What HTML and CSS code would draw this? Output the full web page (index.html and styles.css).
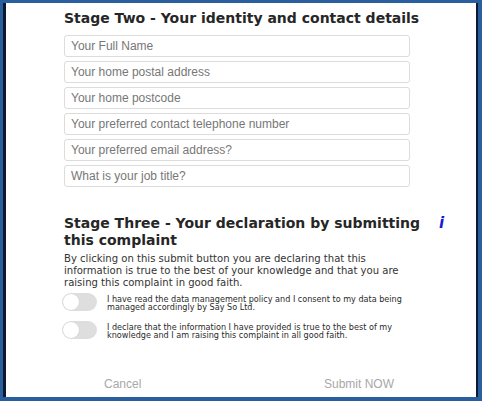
FILE: index.html
```html
<!DOCTYPE html>
<html>
<head>
<meta charset="utf-8">
<link rel="stylesheet" href="styles.css">
</head>
<body>
<div class="frame">
  <div class="panel">
    <div class="content">
      <h2 class="stage-title">Stage Two - Your identity and contact details</h2>
      <div class="fields">
        <input class="field" type="text" placeholder="Your Full Name">
        <input class="field" type="text" placeholder="Your home postal address">
        <input class="field" type="text" placeholder="Your home postcode">
        <input class="field" type="text" placeholder="Your preferred contact telephone number">
        <input class="field" type="text" placeholder="Your preferred email address?">
        <input class="field" type="text" placeholder="What is your job title?">
      </div>
      <div class="stage-three">
        <div class="head-row">
          <h2 class="stage-title wrap">Stage Three - Your declaration by submitting this complaint</h2>
          <span class="info">i</span>
        </div>
        <p class="decl">By clicking on this submit button you are declaring that this information is true to the best of your knowledge and that you are raising this complaint in good faith.</p>
        <div class="toggles">
          <div class="toggle-row">
            <span class="switch"><span class="knob"></span></span>
            <span class="toggle-text">I have read the data management policy and I consent to my data being managed accordingly by Say So Ltd.</span>
          </div>
          <div class="toggle-row">
            <span class="switch"><span class="knob"></span></span>
            <span class="toggle-text">I declare that the information I have provided is true to the best of my knowledge and I am raising this complaint in all good faith.</span>
          </div>
        </div>
      </div>
    </div>
    <div class="footer">
      <span class="btn">Cancel</span>
      <span class="btn">Submit NOW</span>
    </div>
  </div>
</div>
</body>
</html>
```

FILE: styles.css
```css
* { box-sizing: border-box; }
html, body { margin: 0; padding: 0; }
body { width: 482px; height: 401px; background: #2a5f9e; overflow: hidden; }

.frame {
  width: 482px;
  height: 401px;
  background: #2a5f9e;
  padding: 3px 4px 4px 3px;
}
.panel {
  height: 100%;
  background: #fff;
  border-left: 3px solid #0e1830;
  border-right: 2px solid #0e1830;
  display: flex;
  flex-direction: column;
}
.content {
  padding: 6px 0 0 58px;
}
.stage-title {
  margin: 0;
  font-family: "DejaVu Sans", sans-serif;
  font-weight: bold;
  font-size: 14px;
  line-height: 18px;
  color: #262626;
}
.fields {
  margin-top: 8px;
  width: 346px;
  display: flex;
  flex-direction: column;
  gap: 4px;
}
.field {
  display: block;
  width: 346px;
  height: 22px;
  margin: 0;
  border: 1px solid #dcdcdc;
  border-radius: 3px;
  padding: 0 6px;
  font-family: "Liberation Sans", Arial, sans-serif;
  font-size: 12px;
  color: #333;
  background: #fff;
  outline: none;
}
.field::placeholder { color: #777; }

.stage-three { margin-top: 28px; }
.head-row {
  display: flex;
  align-items: flex-start;
}
.stage-title.wrap {
  width: 362px;
  line-height: 17px;
}
.info {
  margin-left: 13px;
  font-family: "DejaVu Sans", sans-serif;
  font-weight: bold;
  font-style: italic;
  font-size: 15px;
  line-height: 17px;
  color: #1a1ad0;
}
.decl {
  margin: 4px 0 0 0;
  width: 360px;
  font-family: "DejaVu Sans Condensed", "DejaVu Sans", sans-serif;
  font-size: 11.2px;
  line-height: 12px;
  color: #333;
}
.toggles {
  margin-top: 4px;
  display: flex;
  flex-direction: column;
  gap: 10px;
}
.toggle-row {
  display: flex;
  align-items: flex-start;
  margin-left: -2px;
}
.switch {
  flex: none;
  width: 35px;
  height: 18px;
  border-radius: 9px;
  background: #dedede;
  position: relative;
}
.knob {
  position: absolute;
  left: 1px;
  top: 1px;
  width: 16px;
  height: 16px;
  border-radius: 50%;
  background: #fff;
  box-shadow: 0 0 1px rgba(0,0,0,0.15);
}
.toggle-text {
  margin-left: 10px;
  width: 300px;
  font-family: "DejaVu Sans Condensed", "DejaVu Sans", sans-serif;
  font-size: 9px;
  line-height: 8px;
  padding-top: 2px;
  color: #2a2a2a;
}
.footer {
  margin-top: auto;
  margin-bottom: 6px;
  padding: 0 82px 0 98px;
  display: flex;
  justify-content: space-between;
}
.btn {
  font-family: "Liberation Sans", Arial, sans-serif;
  font-size: 12px;
  color: #a8a8a8;
}
```
